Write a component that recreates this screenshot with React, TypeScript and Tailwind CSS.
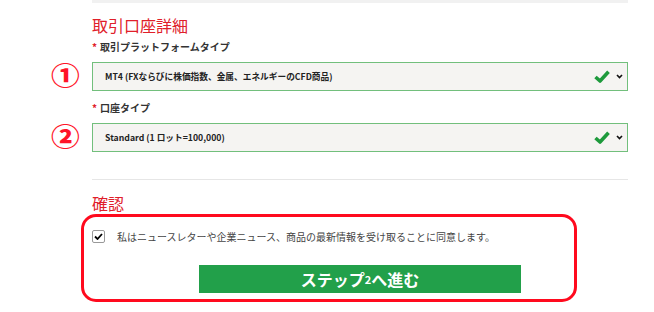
import { FC } from 'react'

const jp = "font-['Noto_Sans_CJK_JP','Noto_Sans',sans-serif]"

const GreenCheck: FC = () => (
  <svg width="16" height="13" viewBox="0 0 16 13" className="shrink-0">
    <path d="M1.5 7 L6 11 L14.5 1.8" fill="none" stroke="#1e9a3c" strokeWidth="3.6" strokeLinejoin="round" />
  </svg>
)

const Chevron: FC = () => (
  <svg width="7" height="5" viewBox="0 0 7 5" className="shrink-0">
    <path d="M1 1 L3.5 3.6 L6 1" fill="none" stroke="#111" strokeWidth="1.6" />
  </svg>
)

const SelectRow: FC<{ label: string; value: string; mark: string; first?: boolean }> = ({ label, value, mark, first }) => (
  <>
    <div className={`${first ? 'mt-[9px]' : 'mt-[12px]'} flex items-center gap-[3px] text-[10px] leading-none font-bold text-[#333]`}>
      <span className="text-[#e0202a]">*</span>
      <span>{label}</span>
    </div>
    <div className="relative mt-[10px] flex h-[29px] items-center border border-[#72bf7c] bg-[#f5f4f2] pl-[12px] pr-[4px]">
      <span className="absolute left-[-41px] top-0 flex h-full w-[28px] -translate-y-[2px] items-center justify-center">
        <span className="scale-x-[1.15] text-[25px] leading-none font-black text-[#ff1428]">{mark}</span>
      </span>
      <span className="flex-1 text-[8.7px] font-bold text-[#222]">{value}</span>
      <GreenCheck />
      <span className="ml-[6px]"><Chevron /></span>
    </div>
  </>
)

export default function App() {
  return (
    <div className={`relative h-[312px] w-[654px] overflow-hidden bg-white ${jp}`}>
      <div className="ml-[92px] w-[536px]">
        <div className="h-[3px] bg-[#f1f1f1]" />

        <h2 className="mt-[14px] text-[16px] leading-none text-[#e0202a]">取引口座詳細</h2>

        <SelectRow first label="取引プラットフォームタイプ" value="MT4 (FXならびに株価指数、金属、エネルギーのCFD商品)" mark="①" />
        <SelectRow label="口座タイプ" value="Standard (1 ロット=100,000)" mark="②" />

        <div className="mt-[27px] h-px bg-[#e6e6e6]" />

        <h2 className="mt-[15px] text-[16px] leading-none text-[#e0202a]">確認</h2>

        <div className="ml-[-11px] mt-[3px] h-[88px] w-[496px] rounded-[15px] border-[3px] border-[#ff0a1e] pl-[8px] pt-[13px]">
          <div className="flex items-center">
            <span className="flex h-[13px] w-[13px] items-center justify-center rounded-[2px] border border-[#999] bg-white">
              <svg width="9" height="7" viewBox="0 0 9 7">
                <path d="M1 3.5 L3.5 6 L8 1" fill="none" stroke="#000" strokeWidth="1.8" />
              </svg>
            </span>
            <span className="ml-[12px] text-[10px] leading-none text-[#444]">
              私はニュースレターや企業ニュース、商品の最新情報を受け取ることに同意します。
            </span>
          </div>
          <div className="ml-[107px] mt-[22px] flex h-[28px] w-[322px] items-center justify-center bg-[#22a04a] text-[16px] font-bold leading-none text-white">
            ステップ<span className="text-[11px]">2</span>へ進む
          </div>
        </div>
      </div>
    </div>
  )
}
